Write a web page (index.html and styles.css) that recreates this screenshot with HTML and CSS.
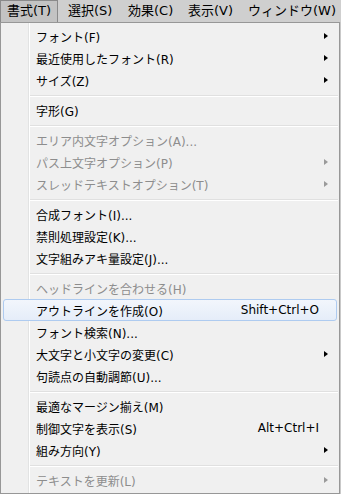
FILE: index.html
```html
<!DOCTYPE html>
<html lang="ja">
<head>
    <meta charset="UTF-8">
    <title>書式メニュー</title>
    <link rel="stylesheet" href="styles.css">
</head>
<body>
    <div class="menubar">
        <span class="menubar-item open">書式(T)</span>
        <span class="menubar-item">選択(S)</span>
        <span class="menubar-item">効果(C)</span>
        <span class="menubar-item">表示(V)</span>
        <span class="menubar-item">ウィンドウ(W)</span>
    </div>
    <div class="menu">
        <div class="item"><span class="label">フォント(F)</span><span class="key"></span><span class="arrow"></span></div>
        <div class="item"><span class="label">最近使用したフォント(R)</span><span class="key"></span><span class="arrow"></span></div>
        <div class="item"><span class="label">サイズ(Z)</span><span class="key"></span><span class="arrow"></span></div>
        <div class="sep"></div>
        <div class="item"><span class="label">字形(G)</span></div>
        <div class="sep"></div>
        <div class="item disabled"><span class="label">エリア内文字オプション(A)...</span></div>
        <div class="item disabled"><span class="label">パス上文字オプション(P)</span><span class="key"></span><span class="arrow"></span></div>
        <div class="item disabled"><span class="label">スレッドテキストオプション(T)</span><span class="key"></span><span class="arrow"></span></div>
        <div class="sep"></div>
        <div class="item"><span class="label">合成フォント(I)...</span></div>
        <div class="item"><span class="label">禁則処理設定(K)...</span></div>
        <div class="item"><span class="label">文字組みアキ量設定(J)...</span></div>
        <div class="sep"></div>
        <div class="item disabled"><span class="label">ヘッドラインを合わせる(H)</span></div>
        <div class="item hover"><span class="label">アウトラインを作成(O)</span><span class="key">Shift+Ctrl+O</span></div>
        <div class="item"><span class="label">フォント検索(N)...</span></div>
        <div class="item"><span class="label">大文字と小文字の変更(C)</span><span class="key"></span><span class="arrow"></span></div>
        <div class="item"><span class="label">句読点の自動調節(U)...</span></div>
        <div class="sep"></div>
        <div class="item"><span class="label">最適なマージン揃え(M)</span></div>
        <div class="item"><span class="label">制御文字を表示(S)</span><span class="key">Alt+Ctrl+I</span></div>
        <div class="item"><span class="label">組み方向(Y)</span><span class="key"></span><span class="arrow"></span></div>
        <div class="sep"></div>
        <div class="item disabled"><span class="label">テキストを更新(L)</span><span class="key"></span><span class="arrow"></span></div>
    </div>
</body>
</html>
```

FILE: styles.css
```css
body {
    margin: 0;
    background: #c9c9c9;
    font-family: "DejaVu Sans", "Noto Sans CJK JP", sans-serif;
    font-size: 12px;
    color: #000;
    width: 341px;
    height: 494px;
    overflow: hidden;
}
.menubar {
    height: 22px;
    display: flex;
    background: #cfcfcf;
}
.menubar-item {
    font-size: 13px;
    padding: 0 8px 0 7px;
    box-sizing: border-box;
    border: 1px solid transparent;
    border-bottom: none;
    height: 22px;
    line-height: 20px;
    width: 60px;
    white-space: nowrap;
}
.menubar-item.open {
    width: 58px;
    margin-right: 2px;
    background: #c3c3c3;
    border-color: #8a8a8a;
    padding-left: 6px;
}
.menubar-item:last-child {
    width: auto;
}
.menu {
    width: 340px;
    box-sizing: border-box;
    border: 1px solid #979797;
    padding: 2px;
    background-color: #f0f0f0;
    background-image: linear-gradient(to right, transparent 27px, #e2e3e3 27px, #e2e3e3 28px, #fff 28px, #fff 29px, transparent 29px);
}
.item {
    height: 22px;
    display: grid;
    grid-template-columns: 32px 1fr auto 17px;
    align-items: center;
    box-sizing: border-box;
    border: 1px solid transparent;
    border-radius: 3px;
    white-space: nowrap;
}
.item .label {
    grid-column: 2;
}
.item .key {
    grid-column: 3;
}
.item .arrow {
    grid-column: 4;
    width: 0;
    height: 0;
    margin-left: 5px;
    border-left: 4px solid #000;
    border-top: 3.5px solid transparent;
    border-bottom: 3.5px solid transparent;
}
.item.disabled {
    color: #8d8d8d;
}
.item.disabled .arrow {
    border-left-color: #9a9a9a;
}
.item.hover {
    border-color: #aecbf0;
    background: linear-gradient(to bottom, #f2f6fc, #e5edf9);
}
.sep {
    height: 8px;
    margin-left: 27px;
    margin-right: -1px;
    background: linear-gradient(to bottom, transparent 4px, #e0e0e0 4px, #e0e0e0 5px, #fff 5px, #fff 6px, transparent 6px);
}
```
